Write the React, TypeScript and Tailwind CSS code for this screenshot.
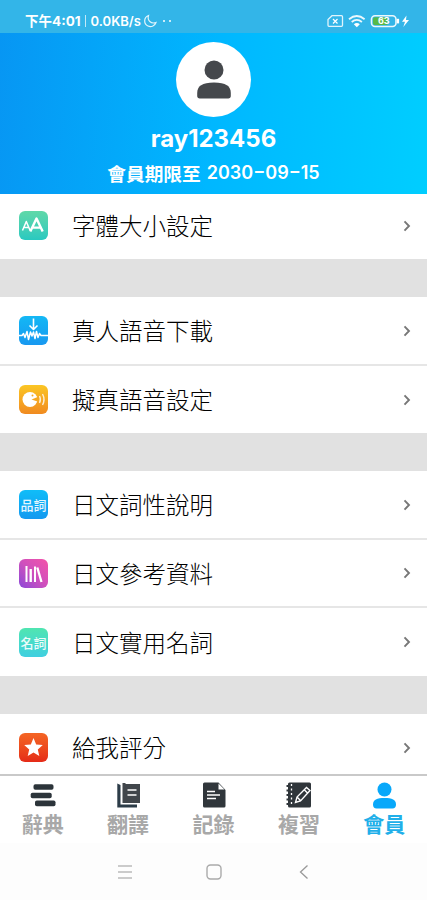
import type { ReactNode } from "react";

const cjk = "font-['Noto_Sans_CJK_TC',sans-serif]";

function FontSizeIcon() {
  return (
    <svg viewBox="0 0 29 29" className="size-[29px]" fill="none" stroke="#fff" strokeLinejoin="round">
      <path d="M3.500 19.500l3.800-9 3.800 9M4.800 16.500h5" strokeWidth="1.500" />
      <path d="M11.300 20.500L17.500 7.500l6.200 13M13.500 16.600h8" strokeWidth="2.400" />
    </svg>
  );
}

function DownloadIcon() {
  return (
    <svg viewBox="0 0 29 29" className="size-[29px]" fill="none" stroke="#fff" strokeLinejoin="round">
      <path d="M14.500 2.500v11M10.500 9.500l4 4 4-4" strokeWidth="1.600" />
      <path d="M0 19.500h3l1.500-2 1.500 4 2-6 1.500 8 2-7.500 1.500 4 1.500-4 1.500 6.500 1.500-7 1.500 6 1.500-4 1.500 2H29" strokeWidth="1.500" />
    </svg>
  );
}

function VoiceIcon() {
  return (
    <svg viewBox="0 0 29 29" className="size-[29px]" fill="none">
      <circle cx="11" cy="14.500" r="7.500" fill="#fff" />
      <path d="M12.500 14.500l8-3.200v6z" fill="#f5a823" />
      <circle cx="13.500" cy="10.500" r="1" fill="#f5a823" />
      <path d="M20.500 11q1.800 3.500 0 7M23.500 9q3 5.500 0 11" stroke="#fff" strokeOpacity=".8" strokeWidth="1.400" />
    </svg>
  );
}

function BooksIcon() {
  return (
    <svg viewBox="0 0 29 29" className="size-[29px]" fill="none" stroke="#fff">
      <path d="M7.500 7v16M16 7.500V23" strokeWidth="2" />
      <path d="M11.700 10v13" strokeWidth="2.400" />
      <path d="M18.300 8.500L22.500 23" strokeWidth="2.300" />
    </svg>
  );
}

function StarIcon() {
  return (
    <svg viewBox="0 0 29 29" className="size-[29px]">
      <path d="M14.500 5l2.700 6.400 6.600.6-5 4.400 1.500 6.600-5.800-3.500L8.700 23l1.500-6.600-5-4.400 6.600-.6z" fill="#fff" />
    </svg>
  );
}

function WordIcon({ children }: { children: string }) {
  return <span className="whitespace-nowrap text-[13px] font-medium leading-none text-white/90">{children}</span>;
}

type Item = { label: string; bg: string; icon: ReactNode };

const groups: Item[][] = [
  [{ label: "字體大小設定", bg: "bg-linear-to-b from-[#5fd8a8] to-[#28c9c0]", icon: <FontSizeIcon /> }],
  [
    { label: "真人語音下載", bg: "bg-linear-to-b from-[#14b8f5] to-[#1898f0]", icon: <DownloadIcon /> },
    { label: "擬真語音設定", bg: "bg-linear-to-b from-[#fbc624] to-[#f08a20]", icon: <VoiceIcon /> },
  ],
  [
    { label: "日文詞性說明", bg: "bg-linear-to-b from-[#10bdf8] to-[#1499f0]", icon: <WordIcon>品詞</WordIcon> },
    { label: "日文參考資料", bg: "bg-linear-to-tr from-[#8a45d8] via-[#cf4fbd] to-[#f552a8]", icon: <BooksIcon /> },
    { label: "日文實用名詞", bg: "bg-linear-to-b from-[#50e5b0] to-[#40cfe0]", icon: <WordIcon>名詞</WordIcon> },
  ],
  [{ label: "給我評分", bg: "bg-linear-to-b from-[#f46524] to-[#e52a18]", icon: <StarIcon /> }],
];

function Row({ item, className }: { item: Item; className: string }) {
  return (
    <div className={`flex items-center bg-white pl-[19px] pr-[15px] ${className}`}>
      <div className={`flex size-[29px] shrink-0 items-center justify-center overflow-hidden rounded-[6px] ${item.bg}`}>
        {item.icon}
      </div>
      <span className="-mt-px ml-6 flex-1 text-[23.5px] font-light leading-[30px] text-black">{item.label}</span>
      <svg viewBox="0 0 10 14" className="h-[14px] w-[10px]" fill="none" stroke="#777" strokeWidth="1.900">
        <path d="M2.500 2.300l4.500 4.700-4.500 4.700" />
      </svg>
    </div>
  );
}

function StatusBar() {
  return (
    <div className="flex h-[33px] items-center bg-[#33b5e8] pl-[25px] pr-[17px] pt-2 text-white">
      <span className="font-['Inter','Noto_Sans_CJK_TC',sans-serif] whitespace-nowrap text-[13.5px] font-bold leading-4">
        下午4:01
      </span>
      <span className="ml-[4px] mr-[5px] h-[12px] w-px bg-white/70" />
      <span className="font-['Inter',sans-serif] whitespace-nowrap text-[13px] font-semibold leading-4">0.0KB/s</span>
      <svg viewBox="0 0 14 14" className="ml-[2px] size-[14px]" fill="none" stroke="#fff" strokeOpacity=".85" strokeWidth="1.200">
        <path d="M5.500 1.500C.5 3.500.5 10 5 12c3.500 1.500 7-.5 8-3.500-5 1.800-9-2-7.500-7z" />
      </svg>
      <span className="ml-[6px] size-[2px] rounded-full bg-white" />
      <span className="ml-[4px] size-[2px] rounded-full bg-white" />
      <svg viewBox="0 0 83 16" className="ml-auto h-4 w-[83px]" fill="none" stroke="#fff">
        <path d="M5 2.700h9.500a1 1 0 0 1 1 1v8.600a1 1 0 0 1-1 1H2a1 1 0 0 1-1-1V6.500z" strokeWidth="1.300" strokeOpacity=".85" />
        <path d="M6 6l4.500 4.500M10.500 6L6 10.500" strokeWidth="1.200" />
        <path d="M22 6.200q7.800-6.500 15.600 0M24.700 9q5.100-4.300 10.200 0" strokeWidth="1.800" strokeOpacity=".9" />
        <path d="M26.800 11.200q3-2.600 6 0l-3 3z" fill="#fff" stroke="none" />
        <rect x="44.500" y="2.700" width="24.500" height="10.800" rx="3.500" strokeWidth="1.600" strokeOpacity=".9" />
        <rect x="46" y="4.200" width="15" height="7.800" rx="2" fill="#57b947" stroke="none" />
        <path d="M71 5.800v4.600" strokeWidth="2.200" />
        <text x="51" y="11.400" fontSize="9" fontWeight="700" fontFamily="Inter, sans-serif" fill="#fff" stroke="none">63</text>
        <path d="M79.500 2.500L75 8.800h3L76.300 14 82 7h-3z" fill="#fff" stroke="none" />
      </svg>
    </div>
  );
}

function Header() {
  return (
    <header className="flex h-[161px] flex-col items-center bg-linear-[95deg,#0796f3,#00b7ff_50%,#00ceff] pt-[9px] text-white">
      <div className="flex size-[75px] shrink-0 items-center justify-center rounded-full bg-white">
        <svg viewBox="0 0 36 40" className="h-10 w-9" fill="#45484c">
          <circle cx="18" cy="10" r="9.500" />
          <path d="M1.200 33c0-7 5-10.500 16.800-10.500S34.800 26 34.800 33v3c0 1.500-1 2.500-2.500 2.500H3.700c-1.500 0-2.500-1-2.500-2.500z" />
        </svg>
      </div>
      <h1 className="mt-[6px] font-['Inter',sans-serif] text-[24px] font-bold leading-8">ray123456</h1>
      <p className="mt-[4px] flex gap-[6px] whitespace-nowrap text-[18.700px] font-bold leading-[28px]">
        <span>會員期限至</span>
        <span className="font-['Inter',sans-serif] text-[18px] font-semibold">2030−09−15</span>
      </p>
    </header>
  );
}

const tabs: { label: string; active?: boolean; icon: ReactNode }[] = [
  {
    label: "辭典",
    icon: (
      <g fill="#2c343a">
        <rect x="5.500" y="3.300" width="20" height="5.500" rx="1.800" />
        <rect x="2.700" y="11.800" width="21" height="5.500" rx="1.800" />
        <rect x="7" y="19.500" width="20.500" height="5.800" rx="1.800" />
      </g>
    ),
  },
  {
    label: "翻譯",
    icon: (
      <>
        <path d="M3.300 2.500L6.500 4v19.500H23v3H3.300z" fill="#2c3c48" />
        <path d="M8.500 22V2h2.500l1 1h14v19z" fill="#41464b" />
        <path d="M13.500 9h9M13.500 14h9" stroke="#fff" strokeWidth="1.500" />
      </>
    ),
  },
  {
    label: "記錄",
    icon: (
      <>
        <path d="M5.500 1.500h14L26.500 9v16a1.500 1.500 0 0 1-1.500 1.500H5.500A1.500 1.500 0 0 1 4 25V3a1.500 1.500 0 0 1 1.500-1.500z" fill="#30363b" />
        <path d="M19.500 2.500v6h6z" fill="#fff" />
        <path d="M8 10.500h8M8 14h13M8 17.500h9" stroke="#fff" strokeWidth="1.500" />
      </>
    ),
  },
  {
    label: "複習",
    icon: (
      <>
        <rect x="4" y="1.500" width="23" height="25" rx="1.500" fill="#30363b" />
        <path d="M2.500 5H7M2.500 9.500H7M2.500 14H7M2.500 18.500H7M2.500 23H7" stroke="#30363b" strokeWidth="2" />
        <path d="M7.500 3v22" stroke="#fff" strokeWidth="1.300" strokeDasharray="2 2.500" />
        <path d="M11.500 21.500l1.500-5.500 9.500-9.500L26 9.500l-9.500 10.500zM20 8.500l3.500 3.500M13 16l3.500 3.500" stroke="#fff" strokeWidth="1.400" fill="none" />
      </>
    ),
  },
  {
    label: "會員",
    active: true,
    icon: (
      <g fill="#08a8fa">
        <circle cx="14.500" cy="8.500" r="7" />
        <path d="M3 23.500c0-5 4-6.500 11.500-6.500S26 18.500 26 23.500c0 2.500-1.300 4-3.500 4h-16C4.300 27.500 3 26 3 23.500z" />
      </g>
    ),
  },
];

export default function App() {
  return (
    <div className={`flex h-[900px] w-[427px] flex-col overflow-hidden bg-white ${cjk}`}>
      <StatusBar />
      <Header />
      <main className="h-[580px] shrink-0 overflow-hidden bg-[#e1e1e1]">
        {groups.map((group, g) => (
          <section key={g} className={g === 0 ? "" : "mt-[38px]"}>
            {group.map((item, i) => {
              let size = "h-[68px] border-b-2 border-[#e6e6e6]";
              if (g === 0) size = "h-[65px] pb-[2px]";
              else if (i === group.length - 1) size = group.length === 3 ? "h-[68px]" : "h-[67px]";
              else if (i === 0) size = "h-[69px] border-b-2 border-[#e6e6e6]";
              return <Row key={item.label} item={item} className={size} />;
            })}
          </section>
        ))}
      </main>
      <nav className="grid h-[69px] shrink-0 grid-cols-5 border-t-2 border-[#c9c9c9] bg-white">
        {tabs.map((tab) => (
          <div key={tab.label} className="flex flex-col items-center pt-[5px]">
            <svg viewBox="0 0 29 29" className="size-[29px] shrink-0">
              {tab.icon}
            </svg>
            <span className={`-mt-px text-[21px] font-bold leading-[28px] ${tab.active ? "text-[#20afe9]" : "text-[#a8a8a8]"}`}>
              {tab.label}
            </span>
          </div>
        ))}
      </nav>
      <div className="flex h-[57px] shrink-0 items-center justify-center gap-[74px] bg-[#fdfdfd]">
        <svg viewBox="0 0 16 16" className="size-4" fill="none" stroke="#bbb" strokeWidth="1.300">
          <path d="M2 2h14M2 8h14M2 14h14" />
        </svg>
        <svg viewBox="0 0 16 16" className="size-4" fill="none" stroke="#aaa" strokeWidth="1.400">
          <rect x="1" y="1" width="14" height="14" rx="3.500" />
        </svg>
        <svg viewBox="0 0 16 16" className="size-4" fill="none" stroke="#999" strokeWidth="1.300">
          <path d="M11.500 1.500L4.500 8l7 6.500" />
        </svg>
      </div>
    </div>
  );
}
